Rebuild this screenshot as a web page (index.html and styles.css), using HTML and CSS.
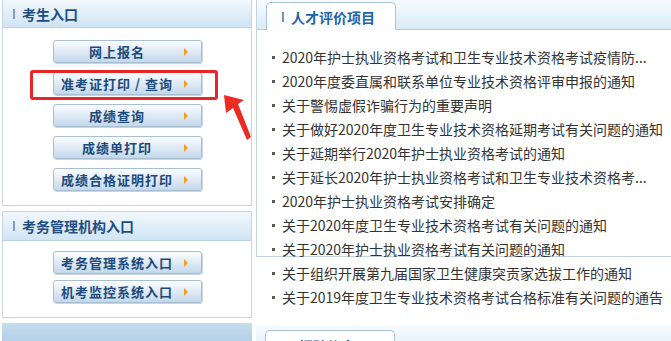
FILE: index.html
```html
<!DOCTYPE html>
<html lang="zh-CN">
<head>
    <meta charset="UTF-8">
    <title>考生入口 - 人才评价项目</title>
    <link rel="stylesheet" href="styles.css">
</head>
<body>
    <div class="page">
        <div class="side">
            <div class="box">
                <div class="box-hd"><i class="bar"></i><span>考生入口</span></div>
                <div class="box-bd">
                    <a class="btn" href="#"><span>网上报名</span><i class="arr"></i></a>
                    <a class="btn" href="#"><span>准考证打印 / 查询</span><i class="arr"></i></a>
                    <a class="btn" href="#"><span>成绩查询</span><i class="arr"></i></a>
                    <a class="btn" href="#"><span>成绩单打印</span><i class="arr"></i></a>
                    <a class="btn" href="#"><span>成绩合格证明打印</span><i class="arr"></i></a>
                </div>
            </div>
            <div class="box box-mgr">
                <div class="box-hd"><i class="bar"></i><span>考务管理机构入口</span></div>
                <div class="box-bd">
                    <a class="btn" href="#"><span>考务管理系统入口</span><i class="arr"></i></a>
                    <a class="btn" href="#"><span>机考监控系统入口</span><i class="arr"></i></a>
                </div>
            </div>
            <div class="box-next"></div>
        </div>

        <div class="main">
            <div class="news">
                <div class="tab-hd">
                    <div class="tab"><i class="bar"></i><span>人才评价项目</span></div>
                </div>
                <ul class="list">
                    <li><a href="#">2020年护士执业资格考试和卫生专业技术资格考试疫情防...</a></li>
                    <li><a href="#">2020年度委直属和联系单位专业技术资格评审申报的通知</a></li>
                    <li><a href="#">关于警惕虚假诈骗行为的重要声明</a></li>
                    <li><a href="#">关于做好2020年度卫生专业技术资格延期考试有关问题的通知</a></li>
                    <li><a href="#">关于延期举行2020年护士执业资格考试的通知</a></li>
                    <li><a href="#">关于延长2020年护士执业资格考试和卫生专业技术资格考...</a></li>
                    <li><a href="#">2020年护士执业资格考试安排确定</a></li>
                    <li><a href="#">关于2020年度卫生专业技术资格考试有关问题的通知</a></li>
                    <li><a href="#">关于2020年护士执业资格考试有关问题的通知</a></li>
                    <li><a href="#">关于组织开展第九届国家卫生健康突贡家选拔工作的通知</a></li>
                    <li><a href="#">关于2019年度卫生专业技术资格考试合格标准有关问题的通告</a></li>
                </ul>
            </div>
            <div class="news-next">
                <div class="tab-hd">
                    <div class="tab tab-2"><i class="bar"></i><span>招聘信息</span></div>
                </div>
            </div>
        </div>

        <!-- 标注：红框 + 箭头 -->
        <div class="mark-box"></div>
        <svg class="mark-arrow" width="40" height="52" viewBox="0 0 40 52">
            <polygon points="4,1 6,19 13,14 27,46 31,43 18,10 24,6" fill="#ee2a24"/>
        </svg>
    </div>
</body>
</html>
```

FILE: styles.css
```css
body {
    margin: 0;
    background: #fff;
    font-family: "Noto Sans CJK SC", sans-serif;
}
a {
    text-decoration: none;
}
.page {
    position: relative;
    display: flex;
    width: 671px;
    height: 341px;
    overflow: hidden;
}

/* 左侧 */
.side {
    width: 250px;
    padding-left: 2px;
    flex-shrink: 0;
}
.box {
    border: 1px solid #c4d6e5;
    border-top: none;
    margin-bottom: 5px;
}
.box-mgr {
    border-top: 1px solid #c4d6e5;
}
.box-hd {
    height: 27px;
    display: flex;
    align-items: center;
    padding-left: 10px;
    background: linear-gradient(#f2f8fd, #d0e4f4);
    border-bottom: 1px solid #bcd3e6;
    color: #1e4d84;
    font-size: 14px;
    font-weight: bold;
}
.box-mgr .box-hd {
    height: 28px;
}
.bar {
    display: inline-block;
    width: 2px;
    height: 10px;
    background: #7d9ec0;
    margin-right: 7px;
}
.box-bd {
    display: flex;
    flex-direction: column;
    align-items: center;
    gap: 9px;
    padding: 12px 0 14px;
}
.box-mgr .box-bd {
    gap: 6px;
    padding: 10px 0 14px;
}
.btn {
    box-sizing: border-box;
    width: 149px;
    height: 23px;
    display: flex;
    align-items: center;
    border: 1px solid #a7bed3;
    border-radius: 3px;
    background: linear-gradient(#fbfdff, #dfebf6 50%, #c3d8ea);
    box-shadow: 1px 1px 0 #c9d4de;
    color: #1c4a7c;
    font-size: 13px;
    font-weight: bold;
    letter-spacing: 1px;
}
.btn span {
    flex: 1;
    text-align: center;
}
.arr {
    width: 0;
    height: 0;
    border-top: 4px solid transparent;
    border-bottom: 4px solid transparent;
    border-left: 4px solid #f5a01e;
    margin: 0 13px 0 3px;
}
.box-next {
    height: 20px;
    background: linear-gradient(#c4dcee, #b3cfe5);
}

/* 右侧 */
.main {
    flex: 1;
    margin-left: 4px;
}
.news {
    box-sizing: border-box;
    height: 257px;
    border-left: 1px solid #c3d3e1;
    border-bottom: 1px solid #c3d3e1;
}
.tab-hd {
    box-sizing: border-box;
    height: 30px;
    display: flex;
    align-items: flex-end;
    padding-left: 9px;
    background: linear-gradient(#f7fbfe, #d9ebf8);
    border-bottom: 1px solid #b6cce0;
}
.tab {
    box-sizing: border-box;
    width: 130px;
    height: 28px;
    margin-bottom: -1px;
    display: flex;
    align-items: center;
    padding-left: 15px;
    background: linear-gradient(#ffffff, #fbfdff);
    border: 1px solid #aac3d8;
    border-bottom: none;
    border-radius: 5px 5px 0 0;
    color: #1f62a8;
    font-size: 14px;
    font-weight: bold;
}
.tab .bar {
    background: #6d93bb;
}
.tab-2 span {
    padding-left: 9px;
}
.list {
    list-style: none;
    margin: 0;
    padding: 15px 0 0 25px;
    white-space: nowrap;
}
.list li {
    position: relative;
    height: 24px;
    line-height: 24px;
    font-size: 14px;
}
.list li::before {
    content: "";
    position: absolute;
    left: -10px;
    top: 11px;
    width: 3px;
    height: 3px;
    background: #5a5a5a;
}
.list a {
    color: #333;
}
.news-next {
    margin-top: 68px;
}
.news-next .tab-hd {
    height: 34px;
    border-bottom: none;
    padding-top: 4px;
}
.news-next .tab {
    height: 30px;
}

/* 标注 */
.mark-box {
    position: absolute;
    left: 30px;
    top: 70px;
    width: 188px;
    height: 30px;
    box-sizing: border-box;
    border: 3px solid #e8262a;
    border-radius: 3px;
}
.mark-arrow {
    position: absolute;
    left: 220px;
    top: 94px;
}
```
